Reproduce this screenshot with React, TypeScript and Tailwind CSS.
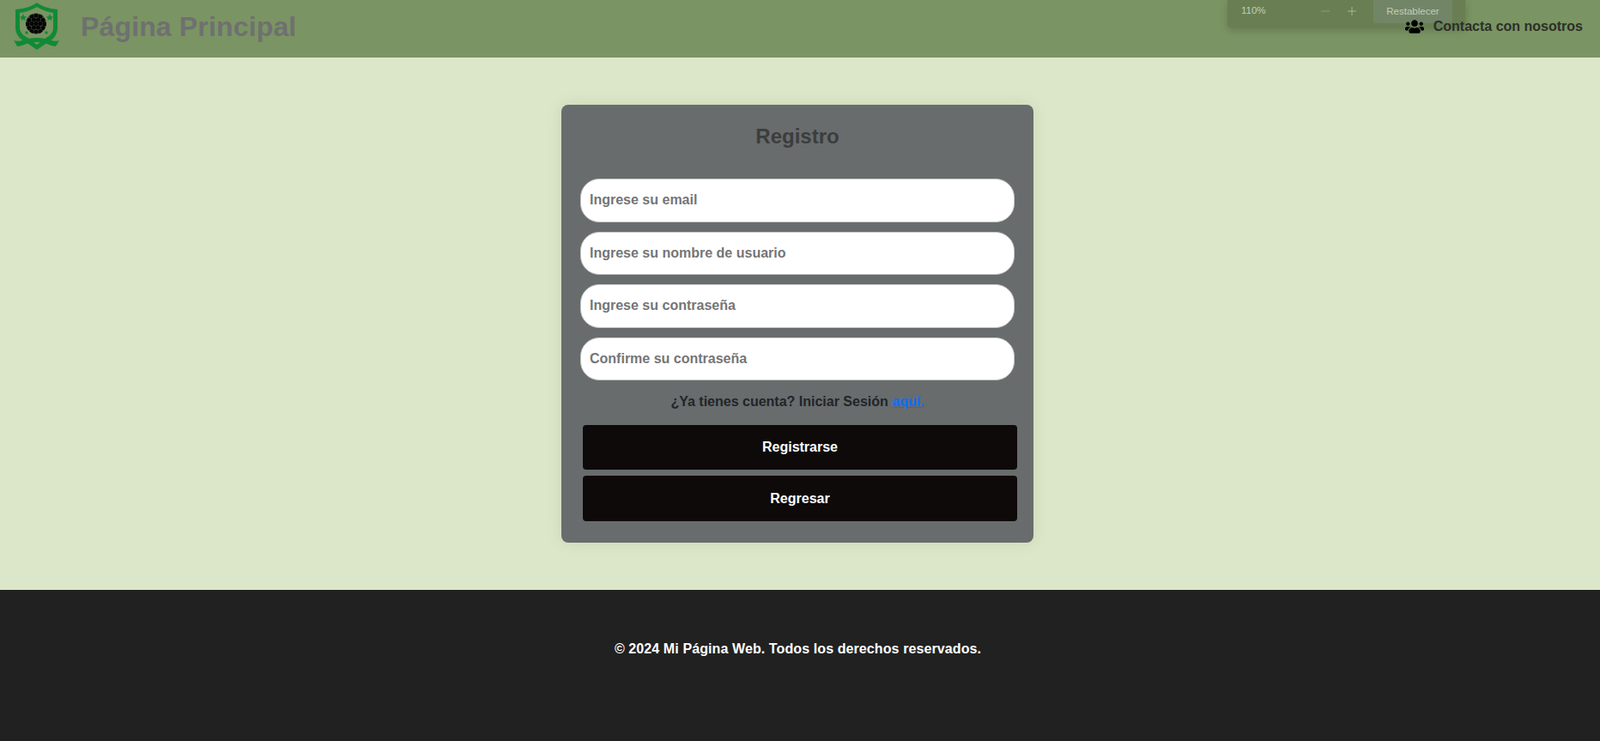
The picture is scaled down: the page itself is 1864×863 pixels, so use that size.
import React from 'react';
import { FaUsers } from 'react-icons/fa';
import { Minus, Plus } from 'lucide-react';

const fields = [
  'Ingrese su email',
  'Ingrese su nombre de usuario',
  'Ingrese su contraseña',
  'Confirme su contraseña',
];

// black cells of the ball in the logo
const cells = [
  [21, 16], [26, 15], [31, 16],
  [18, 20.5], [23.5, 20], [28.5, 20], [34, 20.5],
  [16, 25], [21, 24.5], [26, 24.5], [31, 24.5], [36, 25],
  [18, 29.5], [23.5, 29], [28.5, 29], [34, 29.5],
  [21, 33.5], [26, 34], [31, 33.5],
];

const Logo: React.FC = () => (
  <svg width="54" height="56" viewBox="0 0 54 56" className="shrink-0">
    {/* shield */}
    <path
      fillRule="evenodd"
      d="M27 0 C32 4 40 7 51 8 L51 29 C51 38 46 43 40 46 L27 55 L14 46 C8 43 2 38 2 29 L2 8 C14 7 22 4 27 0 Z M27 5 C32 8 39 11 46 12 L46 29 C46 35 42 39 36 42 L27 49 L18 42 C12 39 7 35 7 29 L7 12 C15 11 22 8 27 5 Z"
      fill="#118a35"
    />
    {/* corner stars */}
    <path d="M11 13 L12.2 16 L15 16.4 L13 18.4 L13.6 21 L11 19.6 L8.4 21 L9 18.4 L7 16.4 L9.8 16 Z" fill="#118a35" />
    <path d="M42 13 L43.2 16 L46 16.4 L44 18.4 L44.6 21 L42 19.6 L39.4 21 L40 18.4 L38 16.4 L40.8 16 Z" fill="#118a35" />
    <circle cx="15" cy="35" r="1.7" fill="#118a35" />
    <circle cx="38" cy="35" r="1.7" fill="#118a35" />
    {/* ball */}
    <circle cx="26" cy="24.5" r="12" fill="#3d4a38" />
    <clipPath id="ball">
      <circle cx="26" cy="24.5" r="12" />
    </clipPath>
    <g clipPath="url(#ball)" fill="#050505">
      {cells.map(([x, y]) => (
        <circle key={`${x}-${y}`} cx={x} cy={y} r="2.5" />
      ))}
    </g>
    {/* ribbon */}
    <path
      d="M0 44 C8 47 14 41 27 41 C40 41 46 47 53 44 L49 51 C43 51 38 46 27 46 C16 46 10 51 4 51 Z"
      fill="#118a35"
    />
  </svg>
);

export default function App() {
  return (
    <div className="relative flex h-[863px] flex-col overflow-hidden bg-[#dbe7c8] font-['Liberation_Sans',Arial,sans-serif] font-bold">
      <header className="flex h-[67px] shrink-0 items-center justify-between bg-[#7a9463] pb-[5px] pl-4 pr-[20px]">
        <div className="flex items-center gap-6">
          <Logo />
          <h1 className="text-[32px] font-bold tracking-[0.15px] text-[#6f7070]">Página Principal</h1>
        </div>
        <a className="relative z-10 flex items-center gap-[11px] text-[16px] text-[#2b2f29]">
          <FaUsers className="text-black" size={22} />
          Contacta con nosotros
        </a>
      </header>

      {/* browser zoom popup caught in the screenshot */}
      <div className="absolute left-[1430px] top-0 flex h-[33px] w-[277px] items-start rounded-b-[5px] bg-[#65794f]/80 pl-[16px] font-normal shadow-[0_2px_10px_rgba(0,0,0,0.18)]">
        <span className="flex h-[26px] w-[90px] items-center text-[11.5px] text-[#c3cdb8]">110%</span>
        <span className="flex h-[26px] w-[31px] items-center text-[#9fac93]">
          <Minus size={16} strokeWidth={1} />
        </span>
        <span className="flex h-[26px] w-[33px] items-center text-[#c3cdb8]">
          <Plus size={16} strokeWidth={1} />
        </span>
        <span className="flex h-[27px] w-[92px] items-center justify-center rounded-b-[3px] bg-[#728566] text-[11.5px] text-[#c3cdb8]">
          Restablecer
        </span>
      </div>

      <main className="flex flex-1 justify-center pr-[6px] pt-[55px]">
        <form className="h-[510px] w-[550px] rounded-[8px] bg-[#686c6d] px-[22px] shadow-[0_0_20px_rgba(0,0,0,0.08)]">
          <h2 className="pt-[22px] text-center text-[24px] leading-[30px] text-[#3c3d3d]">Registro</h2>
          <div className="mt-[34px] flex flex-col gap-[11px]">
            {fields.map(field => (
              <input
                key={field}
                placeholder={field}
                className="h-[50.5px] w-[506px] rounded-[22px] border border-[#c8c8c8] bg-white px-[10px] text-[16px] font-bold placeholder:text-[#757575]"
              />
            ))}
          </div>
          <p className="mt-[14px] text-center text-[16px] leading-[22px] text-[#212529]">
            ¿Ya tienes cuenta? Iniciar Sesión <a className="text-[#0d6efd] underline">aquí.</a>
          </p>
          <div className="ml-[3px] mt-[16px] flex w-[506px] flex-col gap-[7px]">
            <button type="button" className="h-[52px] rounded-[4px] bg-[#0f0a0a] text-[16px] font-bold text-white">
              Registrarse
            </button>
            <button type="button" className="h-[53px] rounded-[4px] bg-[#0f0a0a] text-[16px] font-bold text-white">
              Regresar
            </button>
          </div>
        </form>
      </main>

      <footer className="h-[176px] shrink-0 bg-[#212121] pr-[5px] pt-[58px] text-center text-[16px] leading-[22px] tracking-[0.1px] text-white">
        © 2024 Mi Página Web. Todos los derechos reservados.
      </footer>
    </div>
  );
}
